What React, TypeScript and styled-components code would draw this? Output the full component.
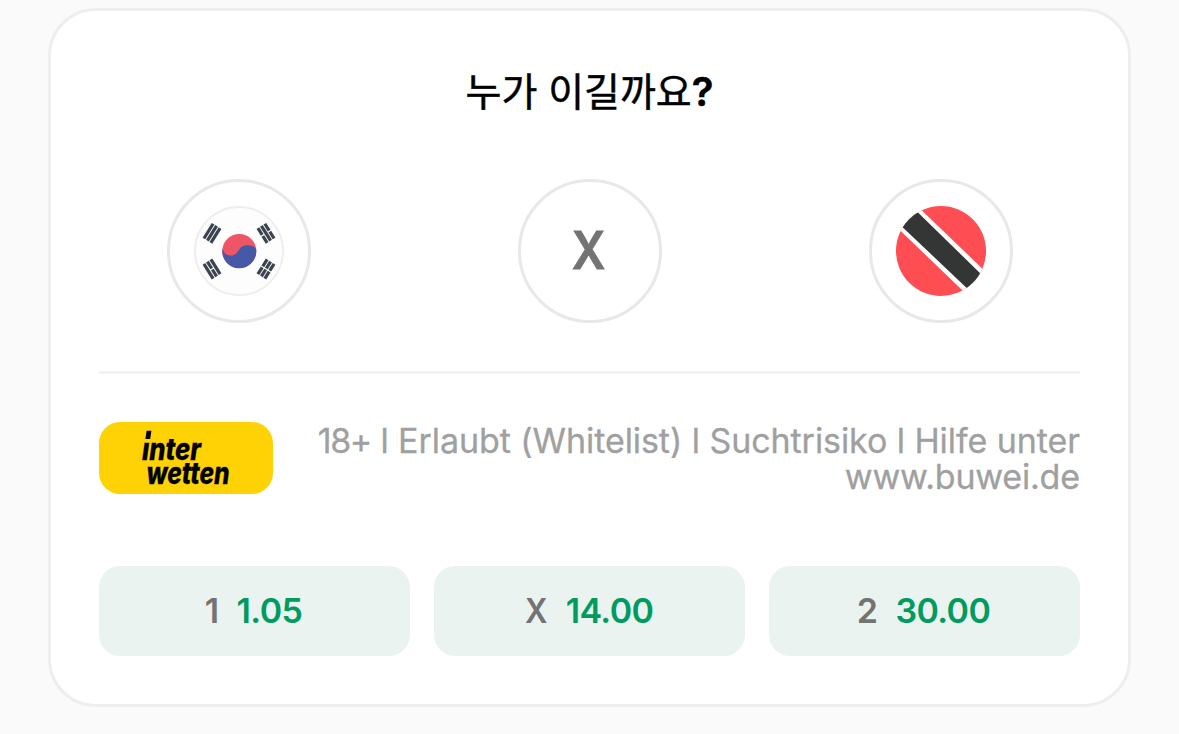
import React from "react";
import styled, { createGlobalStyle } from "styled-components";

const Global = createGlobalStyle`
  * { box-sizing: border-box; }
  body {
    margin: 0;
    background: #fafafa;
    font-family: Inter, "Noto Sans CJK KR", sans-serif;
  }
`;

const Page = styled.main`
  height: 734px;
  padding: 8px 48px 27px;
  overflow: hidden;
`;

const Card = styled.section`
  height: 699px;
  padding: 0 48px;
  background: #fff;
  border: 3px solid #eee;
  border-radius: 48px;
`;

const Title = styled.h1`
  margin: 0;
  padding-top: 51px;
  height: 168px;
  font-size: 39px;
  line-height: 60px;
  font-weight: 400;
  text-align: center;
  color: #000;
  -webkit-text-stroke: 0.5px #000;
`;

const Mark = styled.span`
  font-size: 40px;
  font-weight: 600;
`;

const Choices = styled.div`
  display: flex;
  justify-content: space-between;
  height: 192px;
  padding: 0 67px 0 68px;
`;

const Choice = styled.button`
  display: flex;
  align-items: center;
  justify-content: center;
  width: 144px;
  height: 144px;
  padding: 0;
  border: 3px solid #e8e8e8;
  border-radius: 50%;
  background: #fff;
  color: #737373;
  font: 600 52px/1 Inter, sans-serif;
`;

const Narrow = styled.span<{ $scale: number }>`
  display: inline-block;
  transform: scaleX(${(p) => p.$scale});
`;

const BigX = styled(Narrow)`
  margin-right: 2px;
  -webkit-text-stroke: 0.8px #737373;
`;

const Flag = styled.svg`
  display: block;
  width: 90px;
  height: 90px;
`;

const Sponsor = styled.div`
  display: flex;
  justify-content: space-between;
  height: 195px;
  padding-top: 48px;
  border-top: 3px solid #f3f3f3;
`;

const Logo = styled.svg`
  width: 174px;
  height: 72px;
  border-radius: 21px;
  background: #ffd205;
`;

const Legal = styled.p`
  margin: 0;
  padding-top: 1px;
  font-size: 34px;
  line-height: 36px;
  text-align: right;
  color: #a0a0a0;
  -webkit-text-stroke: 0.3px #a0a0a0;
`;

const Line = styled.span<{ $spacing: number }>`
  display: block;
  letter-spacing: ${(p) => p.$spacing}px;
  margin-right: ${(p) => -p.$spacing}px;
  white-space: nowrap;
`;

const Age = styled.span`
  letter-spacing: -1.4px;
`;

const Odds = styled.div`
  display: grid;
  grid-template-columns: repeat(3, 311px);
  gap: 24px;
`;

const Odd = styled.button`
  display: flex;
  align-items: center;
  justify-content: center;
  gap: 18px;
  height: 90px;
  padding: 0 2px 0 0;
  border: 0;
  border-radius: 21px;
  background: #eaf3f0;
  font: 600 34px/1 Inter, sans-serif;
  color: #737373;
`;

const Outcome = styled.span`
  font-weight: 600;
  letter-spacing: -0.5px;
`;

const Value = styled.span`
  font-weight: 600;
  letter-spacing: -0.6px;
  color: #009b5f;
`;

type Trigram = { x: number; y: number; angle: number; broken: boolean[] };

const trigrams: Trigram[] = [
  { x: 18, y: 27.3, angle: 32, broken: [false, false, false] },
  { x: 72, y: 27.3, angle: -32, broken: [true, false, true] },
  { x: 18, y: 63, angle: -32, broken: [false, true, false] },
  { x: 72, y: 63, angle: 32, broken: [true, true, true] },
];

const KoreaFlag = () => (
  <Flag viewBox="0 0 90 90">
    <circle cx="45" cy="45" r="44" fill="#fdfdfd" stroke="#eee" strokeWidth="2" />
    <circle cx="45.3" cy="45" r="17" fill="#ee5565" />
    <path
      d="M28.5 42.5C29.2 47 32.5 49.5 37 49.5C45.5 49.5 43.5 39.3 53 39.3C57.5 39.3 61 41 62.1 43A17 17 0 1 1 28.5 42.5Z"
      fill="#4758a9"
    />
    {trigrams.map((t) => (
      <g key={`${t.x}-${t.y}`} transform={`translate(${t.x} ${t.y}) rotate(${t.angle})`}>
        {t.broken.map((b, i) => (
          <path
            key={i}
            d={b ? "M0-8.7V-.6M0 .6V8.7" : "M0-8.7V8.7"}
            transform={`translate(${(i - 1) * 4.1} 0)`}
            stroke="#3b434e"
            strokeWidth="3.2"
          />
        ))}
      </g>
    ))}
  </Flag>
);

const TrinidadFlag = () => (
  <Flag viewBox="0 0 90 90">
    <clipPath id="disc">
      <circle cx="45" cy="45" r="45" />
    </clipPath>
    <g clipPath="url(#disc)">
      <path d="M0 0H90V90H0Z" fill="#ff4e53" />
      <path d="M15.5-5.5L95 71L77 94.5L-5 15.7Z" fill="#fff" />
      <path d="M12.1-3.1L94.2 77L80.9 91.7L-3.5 11.6Z" fill="#343535" />
    </g>
  </Flag>
);

export default function App() {
  return (
    <>
      <Global />
      <Page>
        <Card>
          <Title>
            누가 이길까요<Mark>?</Mark>
          </Title>
          <Choices>
            <Choice><KoreaFlag /></Choice>
            <Choice><BigX $scale={0.9}>X</BigX></Choice>
            <Choice><TrinidadFlag /></Choice>
          </Choices>
          <Sponsor>
            <Logo viewBox="0 0 174 72">
              <g
                fontFamily="Inter, sans-serif"
                fontWeight="800"
                fontStyle="italic"
                fontSize="30"
                stroke="#000"
                strokeWidth="0.3"
              >
                <text x="43" y="38" textLength="59" lengthAdjust="spacingAndGlyphs">ınter</text>
                <text x="47.5" y="61.5" textLength="83" lengthAdjust="spacingAndGlyphs">wetten</text>
              </g>
              <path d="M47.6 8.8h4.8l-1.2 8.2h-4.8z" />
            </Logo>
            <Legal>
              <Line $spacing={-0.07}><Age>18+</Age> l Erlaubt (Whitelist) l Suchtrisiko l Hilfe unter</Line>
              <Line $spacing={-0.2}>www.buwei.de</Line>
            </Legal>
          </Sponsor>
          <Odds>
            <Odd><Outcome>1</Outcome><Value>1.05</Value></Odd>
            <Odd><Outcome><Narrow $scale={0.92}>X</Narrow></Outcome><Value>14.00</Value></Odd>
            <Odd><Outcome>2</Outcome><Value>30.00</Value></Odd>
          </Odds>
        </Card>
      </Page>
    </>
  );
}
